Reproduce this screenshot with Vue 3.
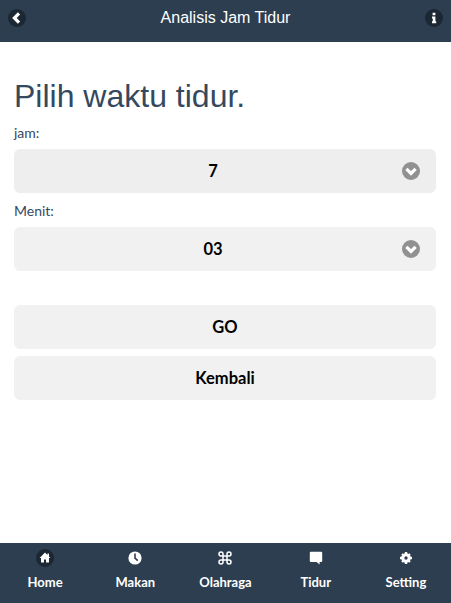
<template>
  <div class="page">
    <header class="topbar">
      <span class="round">
        <svg viewBox="0 0 18 18" width="18" height="18"><path d="M11 4.400 6.400 9l4.600 4.600" fill="none" stroke="#fff" stroke-width="3.200"/></svg>
      </span>
      <span class="title">Analisis Jam Tidur</span>
      <span class="round">
        <svg viewBox="0 0 18 18" width="18" height="18"><path d="M7.600 3.800h2.800v2.400H7.600zM7 7.600h3.400v4.600h.8v2H7v-2h.8V9.600H7z" fill="#fff"/></svg>
      </span>
    </header>

    <main class="content">
      <h1>Pilih waktu tidur.</h1>
      <div v-for="s in selects" :key="s.label" class="field">
        <label>{{ s.label }}</label>
        <div class="select" :class="s.cls">
          <span>{{ s.value }}</span>
          <span class="chevron">
            <svg viewBox="0 0 18 18" width="18" height="18"><path d="M4.400 6.800 9 11.400l4.600-4.600" fill="none" stroke="#fff" stroke-width="3.200"/></svg>
          </span>
        </div>
      </div>
      <div class="actions">
        <button>GO</button>
        <button>Kembali</button>
      </div>
    </main>

    <footer class="tabs">
      <a v-for="t in tabs" :key="t.label" class="tab">
        <span class="tab-icon" :class="{ active: t.active }">
          <svg viewBox="0 0 18 18" width="18" height="18" v-html="t.icon"></svg>
        </span>
        <span class="tab-label">{{ t.label }}</span>
      </a>
    </footer>
  </div>
</template>

<script setup>
const selects = [
  { label: 'jam:', value: '7', cls: 'dark' },
  { label: 'Menit:', value: '03', cls: '' }
]

const tabs = [
  { label: 'Home', active: true, icon: '<path d="M9 3.600 3.600 9H5v4.600h3v-3h2v3h3V9h1.400L13 7.600V4.600h-1.600v1.400z" fill="#fff"/>' },
  { label: 'Makan', icon: '<circle cx="9" cy="9" r="6.600" fill="#fff"/><path d="M9 4.600V9.200l2.800 2.400" fill="none" stroke="#2c3e50" stroke-width="1.600"/>' },
  { label: 'Olahraga', icon: '<path d="M7 7h4v4H7zM7 7H5A2 2 0 1 1 7 5zM11 7V5A2 2 0 1 1 13 7zM11 11h2A2 2 0 1 1 11 13zM7 11v2A2 2 0 1 1 5 11z" fill="none" stroke="#fff" stroke-width="1.500"/>' },
  { label: 'Tidur', icon: '<path d="M3.800 2.800h10.400a1 1 0 0 1 1 1v8.200a1 1 0 0 1-1 1h-1.600v2.600L9.600 13H3.800a1 1 0 0 1-1-1V3.800a1 1 0 0 1 1-1z" fill="#fff"/>' },
  { label: 'Setting', icon: '<circle cx="9" cy="9" r="4.800" fill="#fff"/><path d="M9 3v12M3 9h12" stroke="#fff" stroke-width="2.400"/><path d="M5 5l8 8M13 5l-8 8" stroke="#fff" stroke-width="2"/><circle cx="9" cy="9" r="1.700" fill="#2c3e50"/>' }
]
</script>

<style>
html, body {
  margin: 0;
  background: #fff;
}
</style>

<style scoped>
.page {
  width: 451px;
  height: 603px;
  display: flex;
  flex-direction: column;
  overflow: hidden;
  font-family: Lato, "Open Sans", sans-serif;
}

.topbar {
  height: 42px;
  flex: none;
  box-sizing: border-box;
  padding: 0 8px 6px 8px;
  display: flex;
  align-items: center;
  justify-content: space-between;
  background: #2c3e50;
  color: #fff;
}

.title {
  font-family: "Liberation Sans", Arial, sans-serif;
  font-size: 16px;
}

.round {
  width: 18px;
  height: 18px;
  border-radius: 50%;
  background: #1b2733;
  display: block;
}

.round svg,
.chevron svg,
.tab-icon svg {
  display: block;
}

.content {
  flex: 1;
  padding: 0 15px 0 14px;
}

h1 {
  margin: 35px 0 0;
  height: 48px;
  line-height: 38px;
  font-family: "Liberation Sans", Arial, sans-serif;
  font-size: 32px;
  font-weight: 400;
  color: #34495e;
}

.field label {
  display: block;
  height: 24px;
  line-height: 16px;
  font-size: 14px;
  color: #34495e;
}

.field + .field {
  margin-top: 10px;
}

.select {
  height: 44px;
  box-sizing: border-box;
  padding-right: 24px;
  border-radius: 6px;
  background: #f1f1f1;
  display: flex;
  align-items: center;
  justify-content: center;
  position: relative;
  font-size: 16.5px;
  font-weight: 700;
  color: #000;
}

.select.dark {
  background: #eeeeee;
}

.chevron {
  position: absolute;
  right: 16px;
  top: 13px;
  width: 18px;
  height: 18px;
  border-radius: 50%;
  background: #919191;
}

.actions {
  margin-top: 34px;
  display: flex;
  flex-direction: column;
  gap: 7px;
}

button {
  height: 44px;
  border: 0;
  border-radius: 6px;
  background: #f1f1f1;
  font-family: inherit;
  font-size: 16.5px;
  font-weight: 700;
  color: #000;
}

.tabs {
  height: 60px;
  flex: none;
  display: grid;
  grid-template-columns: repeat(5, 1fr);
  background: #2c3e50;
  color: #fff;
}

.tab {
  display: flex;
  flex-direction: column;
  align-items: center;
  padding-top: 6px;
}

.tab-icon {
  width: 18px;
  height: 18px;
  border-radius: 50%;
}

.tab-icon.active {
  background: #1b2733;
}

.tab-label {
  margin-top: 7px;
  font-size: 13px;
  line-height: 17px;
  font-weight: 700;
}
</style>
